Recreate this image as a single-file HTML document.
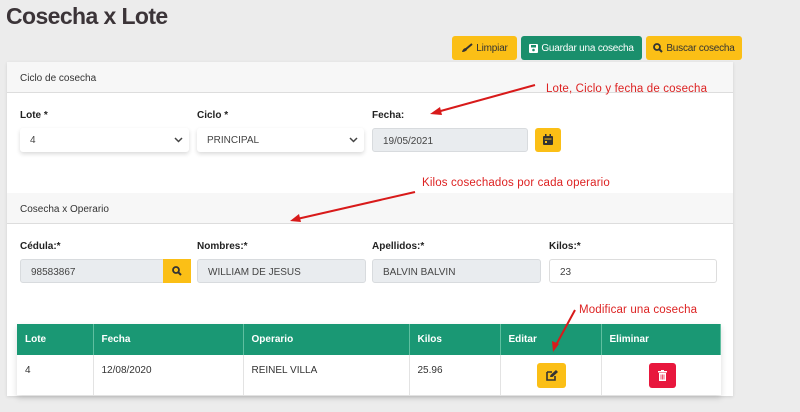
<!DOCTYPE html>
<html><head><meta charset="utf-8"><style>
*{box-sizing:border-box;margin:0;padding:0}
body{width:800px;height:412px;background:#ececec;font-family:"Liberation Sans",sans-serif;position:relative;overflow:hidden;color:#333}
.a{position:absolute}
h1{position:absolute;left:6px;top:3px;font-size:23px;font-weight:bold;color:#3b3438;letter-spacing:-0.6px}
.btn{position:absolute;top:36px;height:24px;border-radius:3px;font-size:10px;display:flex;align-items:center;justify-content:center;gap:3px;color:#333;white-space:nowrap;letter-spacing:-0.2px}
.y{background:#fbbf16}.g{background:#1a8f6c;color:#fff}
.card{position:absolute;left:7px;top:62px;width:726px;height:334px;background:#fff;box-shadow:0 1px 3px rgba(0,0,0,.12)}
.hd{position:absolute;left:7px;width:726px;height:31px;background:#f7f7f7;border-bottom:1px solid #ddd;font-size:10px;padding:11px 13px;color:#333}
.lb{position:absolute;font-size:10px;font-weight:bold;color:#222}
.in{position:absolute;height:24px;border:1px solid #ddd;border-radius:3px;background:#fff;font-size:10px;padding:7px 10px;color:#444}
.gr{background:#e9ecef;border-color:#d8dbde}
.sel{box-shadow:0 2px 4px rgba(0,0,0,.15);border:none}
.chev{position:absolute;right:6px;top:7px}
table{position:absolute;left:17px;top:324px;width:704px;border-collapse:collapse;background:#fff;box-shadow:0 3px 6px rgba(0,0,0,.15);font-size:10px}
th{background:#1a9874;color:#fff;text-align:left;height:31px;padding:0 8px;border-right:1px solid #5fbfa0;font-size:10px}
td{height:40px;padding:0 8px;border-right:1px solid #e3e3e3;vertical-align:top;padding-top:10px}
.red{color:#d22;font-size:11.5px;position:absolute;letter-spacing:0.15px}
</style></head><body>
<h1>Cosecha x Lote</h1>
<div class="btn y" style="left:452px;width:65px"><svg width="12" height="10" viewBox="0 0 12 10"><path d="M11 1 L5 6" stroke="#333" stroke-width="2"/><path d="M1 9 Q2 5 5 5 L6 7 Q4 9 1 9Z" fill="#333"/></svg>Limpiar</div>
<div class="btn g" style="left:521px;width:121px"><svg width="9" height="9" viewBox="0 0 9 9"><rect x="0" y="0" width="9" height="9" rx="1" fill="#fff"/><rect x="2" y="1" width="5" height="2.5" fill="#1a8f6c"/><circle cx="4.5" cy="6" r="1.3" fill="#1a8f6c"/></svg>Guardar una cosecha</div>
<div class="btn y" style="left:646px;width:96px"><svg width="10" height="10" viewBox="0 0 10 10"><circle cx="4" cy="4" r="3" fill="none" stroke="#333" stroke-width="1.8"/><path d="M6.2 6.2 L9 9" stroke="#333" stroke-width="2"/></svg>Buscar cosecha</div>
<div class="card"></div>
<div class="hd" style="top:62px">Ciclo de cosecha</div>
<div class="lb" style="left:20px;top:110px">Lote *</div>
<div class="lb" style="left:197px;top:110px">Ciclo *</div>
<div class="lb" style="left:372px;top:110px">Fecha:</div>
<div class="in sel" style="left:20px;top:128px;width:169px">4<svg class="chev" width="9" height="9" viewBox="0 0 9 9"><path d="M1 3 L4.5 6.5 L8 3" fill="none" stroke="#444" stroke-width="1.5"/></svg></div>
<div class="in sel" style="left:197px;top:128px;width:167px">PRINCIPAL<svg class="chev" width="9" height="9" viewBox="0 0 9 9"><path d="M1 3 L4.5 6.5 L8 3" fill="none" stroke="#444" stroke-width="1.5"/></svg></div>
<div class="in gr" style="left:372px;top:128px;width:156px">19/05/2021</div>
<div class="a y" style="left:535px;top:128px;width:26px;height:24px;border-radius:3px"><svg class="a" style="left:8px;top:6px" width="10" height="11" viewBox="0 0 10 11"><rect x="2" y="0" width="1.5" height="3" fill="#333"/><rect x="6.5" y="0" width="1.5" height="3" fill="#333"/><rect x="0" y="2" width="10" height="9" rx="1" fill="#333"/><rect x="1.5" y="4.5" width="7" height="1" fill="#fbbf16"/><rect x="2" y="7" width="2" height="2" fill="#fbbf16"/></svg></div>
<div class="hd" style="top:193px">Cosecha x Operario</div>
<div class="lb" style="left:20px;top:241px">Cédula:*</div>
<div class="lb" style="left:197px;top:241px">Nombres:*</div>
<div class="lb" style="left:372px;top:241px">Apellidos:*</div>
<div class="lb" style="left:549px;top:241px">Kilos:*</div>
<div class="in gr" style="left:20px;top:259px;width:145px">98583867</div>
<div class="a y" style="left:163px;top:259px;width:28px;height:24px"><svg class="a" style="left:9px;top:7px" width="10" height="10" viewBox="0 0 10 10"><circle cx="4" cy="4" r="3" fill="none" stroke="#333" stroke-width="1.8"/><path d="M6.2 6.2 L9 9" stroke="#333" stroke-width="2"/></svg></div>
<div class="in gr" style="left:197px;top:259px;width:169px">WILLIAM DE JESUS</div>
<div class="in gr" style="left:372px;top:259px;width:169px">BALVIN BALVIN</div>
<div class="in" style="left:549px;top:259px;width:168px">23</div>
<table><tr><th style="width:76px">Lote</th><th style="width:150px">Fecha</th><th style="width:166px">Operario</th><th style="width:91px">Kilos</th><th style="width:101px">Editar</th><th>Eliminar</th></tr>
<tr><td>4</td><td>12/08/2020</td><td>REINEL VILLA</td><td>25.96</td><td style="position:relative"><div class="a y" style="left:36px;top:8px;width:29px;height:25px;border-radius:3px"><svg class="a" style="left:9px;top:7px" width="12" height="11" viewBox="0 0 12 11"><path d="M1 2 H6 M1 2 V10 H9 V6" fill="none" stroke="#333" stroke-width="1.6"/><path d="M4 7 L4.5 5 L10 0 L12 2 L6.5 7Z" fill="#333"/></svg></div></td><td style="position:relative;border:none"><div class="a" style="left:47px;top:8px;width:27px;height:25px;border-radius:3px;background:#e8173d"><svg class="a" style="left:9px;top:7px" width="9" height="11" viewBox="0 0 9 11"><rect x="0" y="1" width="9" height="1.5" fill="#fff"/><rect x="3" y="0" width="3" height="1.5" fill="#fff"/><path d="M1 3 H8 V11 H1Z" fill="#fff"/><path d="M3 4.5 V9.5 M4.5 4.5 V9.5 M6 4.5 V9.5" stroke="#e8173d" stroke-width=".7"/></svg></div></td></tr></table>
<div class="red" style="left:546px;top:83px">Lote, Ciclo y fecha de cosecha</div>
<div class="red" style="left:422px;top:177px">Kilos cosechados por cada operario</div>
<div class="red" style="left:579px;top:304px">Modificar una cosecha</div>
<svg class="a" style="left:0;top:0" width="800" height="412"><g stroke="#d81a1a" stroke-width="2" fill="#d81a1a">
<line x1="535" y1="85" x2="437" y2="112"/><polygon points="430,114 440,107 442,115" stroke="none"/>
<line x1="415" y1="192" x2="297" y2="219"/><polygon points="290,221 299,214 301,222" stroke="none"/>
<line x1="575" y1="310" x2="556" y2="345"/><polygon points="553,352 552,341 559,344" stroke="none"/></g></svg>
</body></html>
